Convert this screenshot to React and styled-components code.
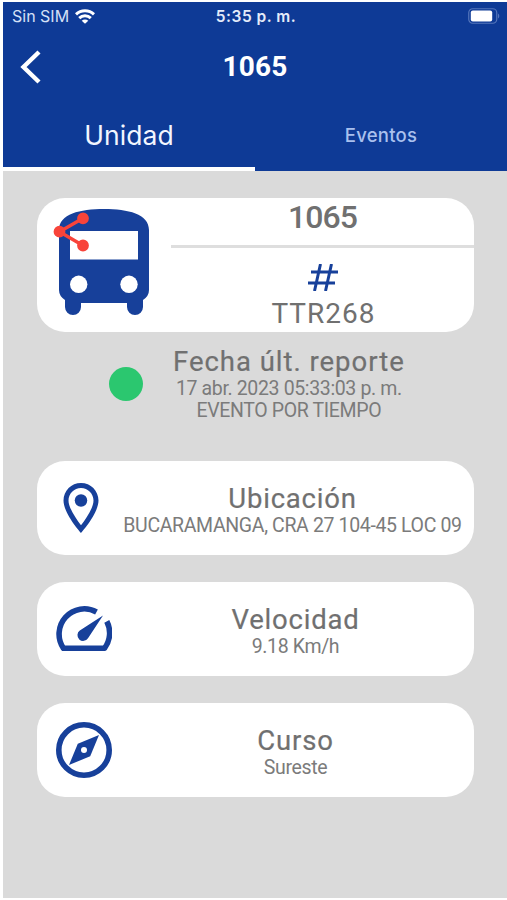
import React from 'react';
import styled, { createGlobalStyle } from 'styled-components';

const GlobalStyle = createGlobalStyle`
* {
  box-sizing: border-box;
}
body {
  margin: 0;
  background: white;
}
`

const Screen = styled.div`
width: 507px;
height: 900px;
padding: 2px 0 2px 3px;
display: flex;
flex-direction: column;
overflow: hidden;
font-family: Roboto, sans-serif;
color: #707070;
`

const Header = styled.header`
height: 169px;
flex: none;
display: flex;
flex-direction: column;
background: #0e3a96;
color: white;
`

const StatusBar = styled.div`
height: 28px;
padding: 0 7px 0 9px;
display: grid;
grid-template-columns: 1fr auto 1fr;
align-items: center;
font-family: Inter, sans-serif;
`

const Carrier = styled.div`
display: flex;
align-items: center;
gap: 6px;
font-size: 16px;
color: #d5e0f7;
`

const Clock = styled.div`
padding-top: 1px;
font-size: 15.5px;
font-weight: 600;
letter-spacing: 0.5px;
color: #e4ebfa;
`

const Battery = styled.svg`
justify-self: end;
`

const NavBar = styled.div`
height: 73px;
padding: 0 16px;
display: grid;
grid-template-columns: 1fr auto 1fr;
align-items: center;
`

const BackIcon = styled.svg`
display: block;
`

const NavTitle = styled.h1`
margin: 0;
font-size: 28px;
line-height: 34px;
font-weight: 700;
letter-spacing: 0.2px;
`

const Tabs = styled.div`
flex: 1;
display: grid;
grid-template-columns: 1fr 1fr;
font-family: Inter, sans-serif;
`

const Tab = styled.button`
background: none;
border: none;
border-bottom: 4px solid ${props => props.$active ? 'white' : 'transparent'};
padding: 0 0 1px;
font-family: inherit;
font-size: ${props => props.$active ? '26.5px' : '18.5px'};
font-weight: ${props => props.$active ? 400 : 500};
letter-spacing: ${props => props.$active ? '0.1px' : '0.25px'};
color: ${props => props.$active ? '#f2f6ff' : '#a9c0ee'};
`

const Content = styled.main`
flex: 1;
padding: 26.5px 33px 0 34px;
background: #dadada;
`

const Card = styled.section`
display: flex;
align-items: center;
height: ${props => props.$tall ? '134px' : '94px'};
margin-bottom: ${props => props.$tall ? '0' : '27px'};
border-radius: 28px;
background: white;
overflow: hidden;
`

const IconBox = styled.div`
width: ${props => props.$width}px;
flex: none;
display: flex;
padding: 0 0 ${props => props.$bottom || 0}px ${props => props.$left}px;
`

const UnitInfo = styled.div`
flex: 1;
height: 100%;
display: flex;
flex-direction: column;
align-items: center;
`

const UnitNumber = styled.div`
height: 47.5px;
font-size: 32px;
line-height: 38px;
font-weight: 500;
letter-spacing: -0.9px;
`

const Divider = styled.hr`
width: 100%;
height: 3px;
margin: 0;
border: none;
background: #dedede;
`

const HashIcon = styled.svg`
margin-top: 16px;
`

const Plate = styled.div`
margin-top: 7px;
padding-left: 2px;
font-size: 28px;
line-height: 32px;
letter-spacing: 1px;
`

const Report = styled.section`
height: 129.5px;
padding: 14px 0 0 72px;
display: flex;
align-items: flex-start;
`

const StatusDot = styled.div`
width: 34px;
height: 34px;
margin: 21px 30px 0 0;
border-radius: 50%;
background: #2bc76f;
`

const Texts = styled.div`
flex: ${props => props.$fit ? 'none' : 1};
padding-top: ${props => props.$fit ? '0.5px' : '3px'};
text-align: center;
white-space: nowrap;
`

const Label = styled.h2`
margin: 0;
font-size: 27.5px;
line-height: 32px;
font-weight: 400;
letter-spacing: ${props => props.$wide ? '0.98px' : '0.8px'};
-webkit-text-stroke: 0.2px #707070;
`

const Value = styled.p`
margin: 0;
font-size: 19.5px;
line-height: 22px;
letter-spacing: -0.36px;
color: #7b7b7b;
`

const BLUE = '#17409a';

const WifiIcon = () => (
  <svg width="20" height="15" viewBox="0 0 20 15" fill="none" stroke="white" strokeWidth="3">
    <path d="M1 5.3C6 .5 14 .5 19 5.3" />
    <path d="M4.2 9.1C7.5 6 12.5 6 15.8 9.1" />
    <path d="M6.7 11.7C8.6 10 11.4 10 13.3 11.7L10 14.8Z" fill="white" stroke="none" />
  </svg>
)

const BatteryIcon = () => (
  <Battery width="33" height="16" viewBox="0 0 33 16">
    <rect x="1.75" y="0.75" width="28" height="14.5" rx="4" fill="none" stroke="#5475bb" strokeWidth="1.2" />
    <rect x="3.8" y="2.6" width="21.4" height="10.8" rx="2" fill="white" />
    <path d="M31 5.5C32.7 6.2 32.7 9.8 31 10.5Z" fill="#5475bb" />
  </Battery>
)

const BusIcon = () => (
  <svg width="98" height="108" viewBox="0 0 98 108">
    <path
      fill={BLUE}
      d="M6 22C6 6 27 1 51 1S96 6 96 22V82Q96 88 90 92V99A8 8 0 0 1 74 99V95H28V99A8 8 0 0 1 12 99V92Q6 88 6 82Z"
    />
    <rect x="17" y="23" width="68" height="28.5" fill="white" />
    <circle cx="25.7" cy="76.3" r="8.7" fill="white" />
    <circle cx="76" cy="76.3" r="8.7" fill="white" />
    <g fill="#f8443a" stroke="#f8443a" strokeWidth="3.4">
      <path fill="none" d="M30 10.3L6.5 23.7L30 37.5" />
      <circle cx="30" cy="10.3" r="4.2" />
      <circle cx="6.5" cy="23.7" r="4.2" />
      <circle cx="30" cy="37.5" r="4.2" />
    </g>
  </svg>
)

const PinIcon = () => (
  <svg width="60" height="60" viewBox="0 0 24 24" fill={BLUE}>
    <path d="M12 2C8.13 2 5 5.13 5 9c0 5.25 7 13 7 13s7-7.75 7-13c0-3.87-3.13-7-7-7zM7 9c0-2.76 2.24-5 5-5s5 2.24 5 5c0 2.88-2.88 7.19-5 9.88C9.92 16.21 7 11.85 7 9z" />
    <circle cx="12" cy="9" r="2.5" />
  </svg>
)

const SpeedIcon = () => (
  <svg width="56" height="46" viewBox="0 0 56 46">
    <path
      fill="none"
      stroke={BLUE}
      strokeWidth="5.6"
      strokeLinejoin="round"
      d="M40.5 6A25.2 25.2 0 0 0 7.5 42.3H48.5A25.2 25.2 0 0 0 50.8 15.4"
    />
    <path fill={BLUE} d="M47 9.5L32 32.2A5.7 5.7 0 1 1 23.8 24.6Z" />
  </svg>
)

const CompassIcon = () => (
  <svg width="56" height="56" viewBox="0 0 56 56">
    <circle cx="28" cy="28" r="25.2" fill="none" stroke={BLUE} strokeWidth="5.6" />
    <path fill={BLUE} d="M43 13L34.2 34.2L13 43L21.8 21.8Z" />
    <circle cx="28" cy="28" r="3" fill="white" />
  </svg>
)

class App extends React.Component {
    render() {
        return (
            <Screen>
                <GlobalStyle />
                <Header>
                    <StatusBar>
                        <Carrier>Sin SIM <WifiIcon /></Carrier>
                        <Clock>5:35 p. m.</Clock>
                        <BatteryIcon />
                    </StatusBar>

                    <NavBar>
                        <BackIcon width="23" height="34" viewBox="0 0 23 34">
                            <path d="M20 2L4.5 17L20 32" fill="none" stroke="white" strokeWidth="4.4" />
                        </BackIcon>
                        <NavTitle>1065</NavTitle>
                    </NavBar>

                    <Tabs>
                        <Tab type="button" $active>Unidad</Tab>
                        <Tab type="button">Eventos</Tab>
                    </Tabs>
                </Header>

                <Content>
                    <Card $tall>
                        <IconBox $width={134} $left={16} $bottom={6}><BusIcon /></IconBox>
                        <UnitInfo>
                            <UnitNumber>1065</UnitNumber>
                            <Divider />
                            <HashIcon width="30" height="27" viewBox="0 0 30 27">
                                <path
                                  fill="none"
                                  stroke={BLUE}
                                  strokeWidth="3"
                                  d="M12.5 0L6.5 27M23.5 0L17.5 27M3 8H30M0 19H27"
                                />
                            </HashIcon>
                            <Plate>TTR268</Plate>
                        </UnitInfo>
                    </Card>

                    <Report>
                        <StatusDot />
                        <Texts $fit>
                            <Label $wide>Fecha últ. reporte</Label>
                            <Value>17 abr. 2023 05:33:03 p. m.</Value>
                            <Value>EVENTO POR TIEMPO</Value>
                        </Texts>
                    </Report>

                    <Card>
                        <IconBox $width={74} $left={14}><PinIcon /></IconBox>
                        <Texts>
                            <Label>Ubicación</Label>
                            <Value>BUCARAMANGA, CRA 27 104-45 LOC 09</Value>
                        </Texts>
                    </Card>

                    <Card>
                        <IconBox $width={80} $left={19}><SpeedIcon /></IconBox>
                        <Texts>
                            <Label>Velocidad</Label>
                            <Value>9.18 Km/h</Value>
                        </Texts>
                    </Card>

                    <Card>
                        <IconBox $width={80} $left={19}><CompassIcon /></IconBox>
                        <Texts>
                            <Label>Curso</Label>
                            <Value>Sureste</Value>
                        </Texts>
                    </Card>
                </Content>
            </Screen>
        )
    }
};

export default App;
